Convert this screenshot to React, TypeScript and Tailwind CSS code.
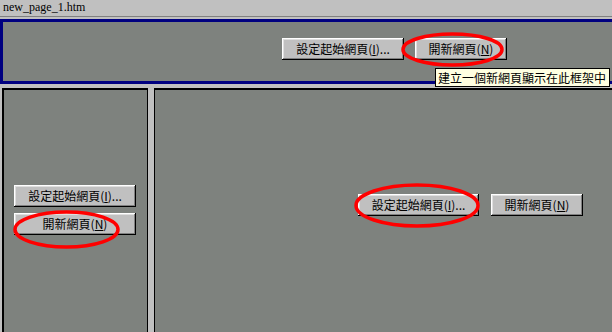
const btn =
  "h-[22px] shrink-0 bg-[#c0c0c0] text-black text-[12px] leading-none flex items-center justify-center shadow-[inset_-1px_-1px_#000,inset_1px_1px_#fff,inset_-2px_-2px_#808080,inset_2px_2px_#dfdfdf]";

const cjk = { fontFamily: '"Noto Sans CJK TC", "Liberation Sans", sans-serif' };

const StartButton = ({ w }: { w: string }) => (
  <button className={`${btn} ${w}`} style={cjk}>
    設定起始網頁(<u>I</u>)...
  </button>
);

const NewButton = ({ w }: { w: string }) => (
  <button className={`${btn} ${w}`} style={cjk}>
    開新網頁(<u>N</u>)
  </button>
);

// red hand-drawn highlight ring
const Ring = ({ x, y, w, h }: { x: number; y: number; w: number; h: number }) => (
  <svg
    className="absolute pointer-events-none"
    style={{ left: x, top: y }}
    width={w}
    height={h}
    viewBox={`0 0 ${w} ${h}`}
  >
    <ellipse cx={w / 2} cy={h / 2} rx={w / 2 - 2} ry={h / 2 - 2} fill="none" stroke="#ff0000" strokeWidth="3.5" />
  </svg>
);

export default function App() {
  return (
    <div className="relative w-[612px] h-[332px] overflow-hidden bg-[#c0c0c0] flex flex-col items-start">
      {/* title */}
      <div
        className="h-[17px] w-full shrink-0 px-[3px] text-[12px] leading-[15px] text-black border-b border-[#808080]"
        style={{ fontFamily: '"Liberation Serif", serif' }}
      >
        new_page_1.htm
      </div>

      {/* top frame, runs off the right edge */}
      <div className="mt-[2px] h-[65px] shrink-0 min-w-[700px] border-t-[3px] border-l-[3px] border-b-[3px] border-[#000080] bg-[#7e827e] flex items-start gap-[11px] pl-[279px] pt-[16px]">
        <StartButton w="w-[122px]" />
        <NewButton w="w-[92px]" />
      </div>

      {/* lower frames */}
      <div className="flex-1 w-full flex pt-[4px]">
        <div className="ml-[2px] w-[146px] shrink-0 border-t-2 border-l-2 border-r border-black bg-[#7e827e] flex flex-col gap-[6px] pl-[10px] pt-[95px]">
          <StartButton w="w-[122px]" />
          <NewButton w="w-[122px]" />
        </div>
        <div className="w-[6px] shrink-0 bg-[#c0c0c0]" />
        <div className="flex-1 border-t-2 border-l border-black bg-[#7e827e] flex items-start gap-[12px] pl-[203px] pt-[104px]">
          <StartButton w="w-[121px]" />
          <NewButton w="w-[92px]" />
        </div>
      </div>

      {/* tooltip */}
      <div
        className="absolute left-[435px] top-[68px] h-[19px] w-[175px] bg-[#ffffe1] border border-black text-black text-[12px] leading-[17px] px-[2px] whitespace-nowrap"
        style={cjk}
      >
        建立一個新網頁顯示在此框架中
      </div>

      <Ring x={401} y={32} w={103} h={35} />
      <Ring x={13} y={210} w={107} h={39} />
      <Ring x={354} y={183} w={126} h={45} />
    </div>
  );
}
